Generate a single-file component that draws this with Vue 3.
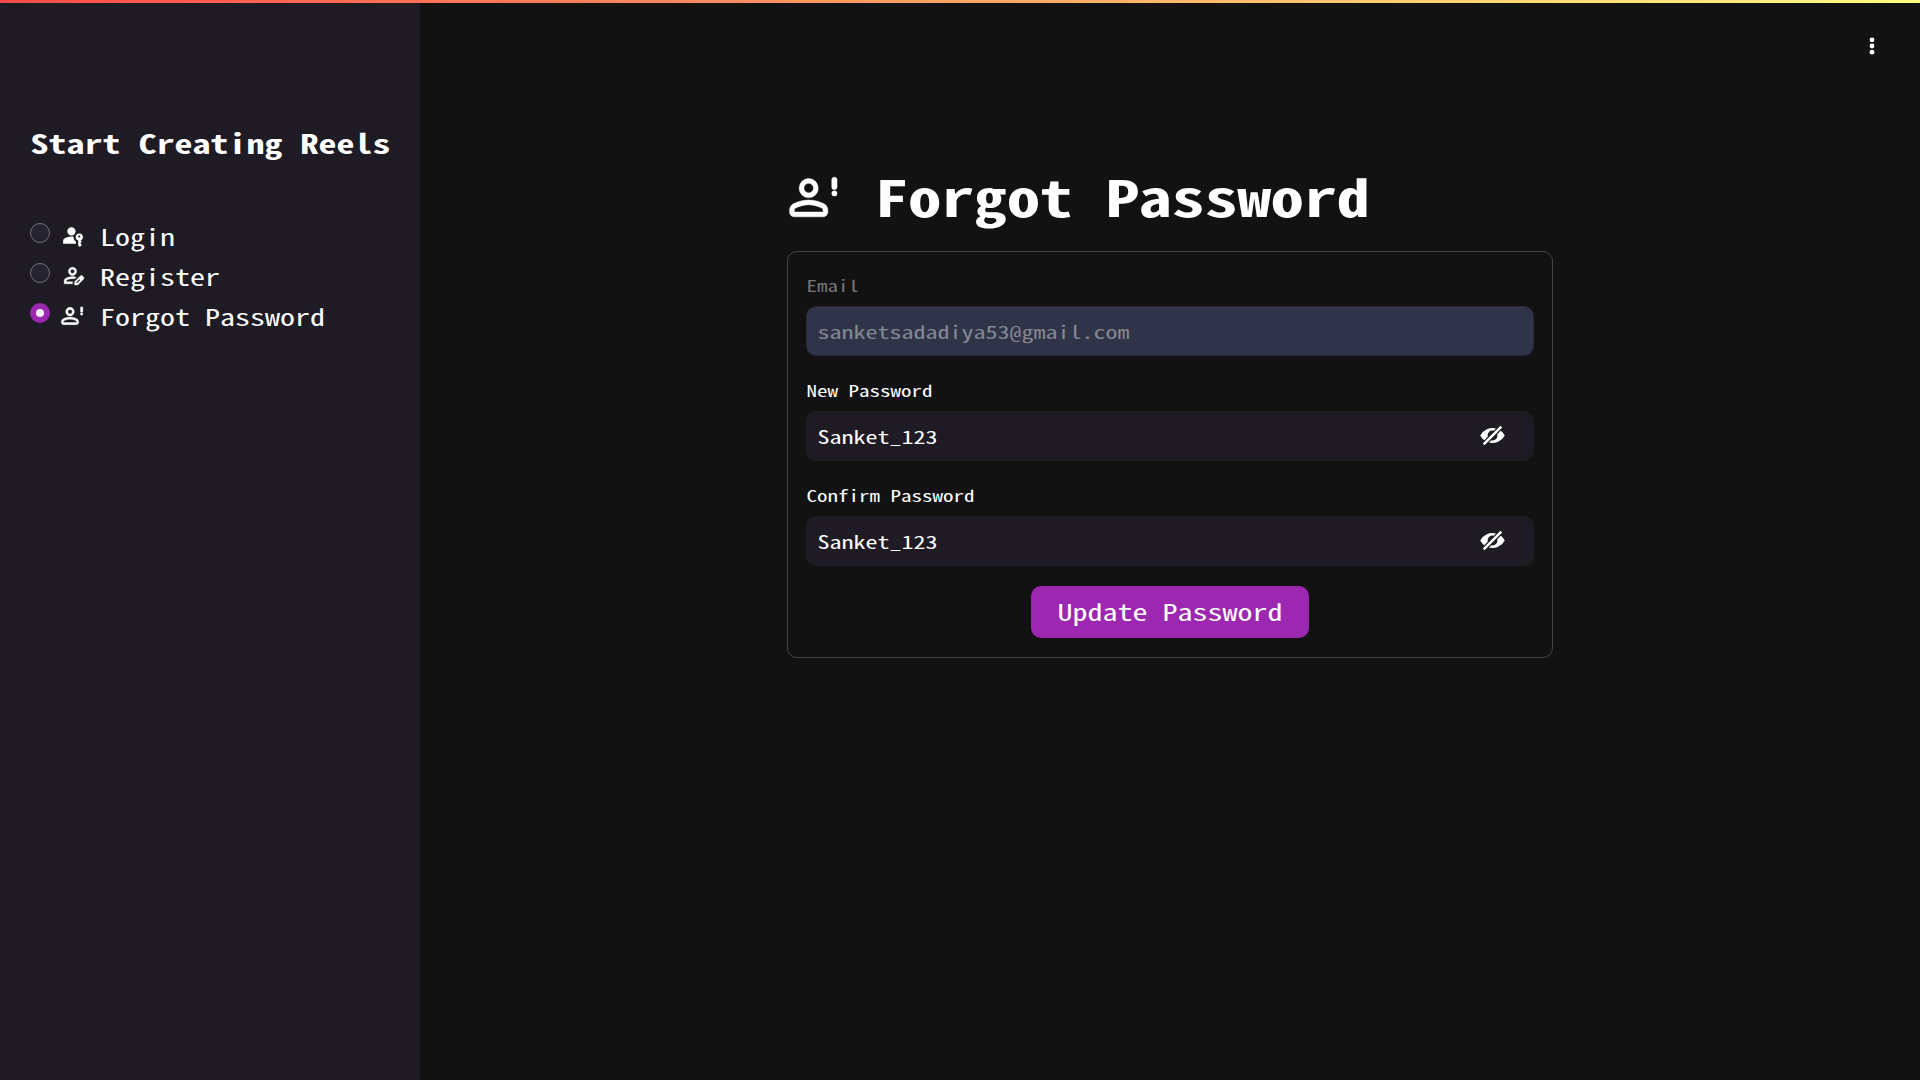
<script setup>
import { ref } from 'vue'

const icons = {
  key: 'M120-160v-112q0-34 17.5-62.5T184-378q62-31 126-46.5T440-440q20 0 40 1.5t40 4.5q-4 58 21 109.5t73 84.5v80H120ZM760-40l-60-60v-186q-44-13-72-49.5T600-420q0-58 41-99t99-41q58 0 99 41t41 99q0 45-25.5 80T790-290l50 50-60 60 60 60-80 80ZM440-480q-66 0-113-47t-47-113q0-66 47-113t113-47q66 0 113 47t47 113q0 66-47 113t-113 47Zm300 80q17 0 28.5-11.5T780-440q0-17-11.5-28.5T740-480q-17 0-28.5 11.5T700-440q0 17 11.5 28.5T740-400Z',
  edit: 'M160-160v-112q0-34 17.5-62.5T224-378q62-31 126-46.5T480-440q37 0 73 4.5t72 14.5l-67 68q-20-3-39-5t-39-2q-56 0-111 13.5T260-306q-9 5-14.5 14t-5.5 20v32h240v80H160Zm400 40v-123l221-220q9-9 20-13t22-4q12 0 23 4.5t20 13.5l37 37q8 9 12.5 20t4.5 22q0 11-4 22.5T903-340L683-120H560Zm60-60h38l121-122-18-19-19-18-122 121v38ZM480-480q-66 0-113-47t-47-113q0-66 47-113t113-47q66 0 113 47t47 113q0 66-47 113t-113 47Zm0-80q33 0 56.5-23.5T560-640q0-33-23.5-56.5T480-720q-33 0-56.5 23.5T400-640q0 33 23.5 56.5T480-560Z',
  alert: 'M12 12q-1.65 0-2.825-1.175T8 8t1.175-2.825T12 4t2.825 1.175T16 8t-1.175 2.825T12 12ZM12 10q.825 0 1.413-.587T14 8t-.587-1.413T12 6t-1.413.587T10 8t.587 1.413T12 10ZM4 18v-.8q0-.85.438-1.562T5.6 14.55q1.55-.775 3.15-1.162T12 13t3.25.388 3.15 1.162q.725.375 1.163 1.088T20 17.2v.8q0 .825-.587 1.413T18 20H6q-.825 0-1.412-.587T4 18Zm2 0h12v-.8q0-.275-.137-.5t-.363-.35q-1.35-.675-2.725-1.012T12 15t-2.775.338T6.5 16.35q-.225.125-.363.35T6 17.2ZM21.65 4.5a1.1 1.1 0 0 1 2.2 0v3a1.1 1.1 0 0 1-2.2 0ZM22.75 9.1a1.1 1.1 0 1 1 0 2.2 1.1 1.1 0 0 1 0-2.2Z',
}

const selected = ref('forgot')
const menu = [
  { id: 'login', label: 'Login', icon: icons.key, box: '0 -960 960 960' },
  { id: 'register', label: 'Register', icon: icons.edit, box: '0 -960 960 960' },
  { id: 'forgot', label: 'Forgot Password', icon: icons.alert, box: '0 0 26 24' },
]

const fields = [
  { label: 'Email', value: 'sanketsadadiya53@gmail.com', disabled: true },
  { label: 'New Password', value: 'Sanket_123' },
  { label: 'Confirm Password', value: 'Sanket_123' },
]
</script>

<template>
  <div class="app">
    <div class="decoration"></div>
    <aside class="sidebar">
      <h2 class="brand"><span class="wide">Start Creating Reels</span></h2>
      <nav class="menu">
        <div v-for="m in menu" :key="m.id" class="option" @click="selected = m.id">
          <span class="radio" :class="{ on: selected === m.id }"></span>
          <span class="glyph">
            <svg :class="m.id" :viewBox="m.box"><path fill-rule="evenodd" :d="m.icon" /></svg>
          </span>
          <span class="option-label wide">{{ m.label }}</span>
        </div>
      </nav>
    </aside>
    <main class="main">
      <header class="toolbar">
        <svg class="dots" viewBox="0 0 6 20">
          <circle cx="3" cy="3.8" r="2.4" />
          <circle cx="3" cy="10" r="2.4" />
          <circle cx="3" cy="16.2" r="2.4" />
        </svg>
      </header>
      <section class="content">
        <h1 class="title">
          <svg class="title-icon" viewBox="0 0 26 24"><path fill-rule="evenodd" :d="icons.alert" /></svg>
          <span class="title-text wide">Forgot Password</span>
        </h1>
        <form class="card" @submit.prevent>
          <div v-for="f in fields" :key="f.label" class="field" :class="{ disabled: f.disabled }">
            <label class="label"><span class="wide">{{ f.label }}</span></label>
            <div class="input">
              <span class="wide">{{ f.value }}</span>
              <svg v-if="!f.disabled" class="eye" viewBox="0 0 20 20">
                <path d="M12.81 4.36l-1.77 1.78a4 4 0 0 0-4.9 4.9l-2.76 2.75C2.06 12.79.96 11.49.2 10a11 11 0 0 1 12.6-5.64zm3.8 1.85c1.33 1 2.43 2.3 3.2 3.79a11 11 0 0 1-12.62 5.64l1.77-1.78a4 4 0 0 0 4.9-4.9l2.76-2.75zm-.25-3.99l1.42 1.42L3.64 17.78l-1.42-1.42L16.36 2.22z" />
              </svg>
            </div>
          </div>
          <button class="submit" type="submit"><span class="wide">Update Password</span></button>
        </form>
      </section>
    </main>
  </div>
</template>

<style>
body {
  margin: 0;
  background: #121212;
}
</style>

<style scoped>
.app {
  position: relative;
  display: flex;
  height: 1080px;
  overflow: hidden;
  background: #121212;
  color: #fff;
  font-family: "Noto Sans Mono CJK SC", "DejaVu Sans Mono", monospace;
  font-size: 24px;
}
/* gives the condensed half-width Latin glyphs normal proportions */
.wide {
  display: inline-block;
  vertical-align: top;
  white-space: nowrap;
  transform: scaleY(0.75);
}
svg {
  display: block;
  flex: none;
  fill: #fff;
}
.decoration {
  position: absolute;
  top: 0;
  left: 0;
  right: 0;
  height: 3px;
  background: linear-gradient(90deg, #ff4b4b, #fffd80);
}
.sidebar {
  box-sizing: border-box;
  flex: none;
  width: 420px;
  padding: 118px 0 0 30px;
  background: #1f1b24;
}
.brand {
  margin: 0;
  height: 48px;
  padding-left: 0.4px;
  font-size: 36px;
  font-weight: 700;
  line-height: 48px;
}
.menu {
  margin-top: 52px;
}
.option {
  display: flex;
  height: 40px;
}
.radio {
  box-sizing: border-box;
  flex: none;
  width: 20px;
  height: 20px;
  margin-top: 5px;
  border: 1px solid #75737a;
  border-radius: 50%;
  background: #26222f;
}
.radio.on {
  border: 6px solid #9c27b0;
  background: #f0f0f5;
}
.glyph {
  width: 50px;
  padding: 5px 0 0 10px;
  box-sizing: border-box;
}
.glyph svg {
  width: 25px;
  height: 25px;
}
.glyph svg.register {
  stroke: #fff;
  stroke-width: 14;
}
.glyph svg.forgot {
  width: 28.2px;
  height: 26px;
  margin-left: -3.5px;
  stroke: #fff;
  stroke-width: 0.3;
}
.option-label {
  height: 37px;
  font-size: 30px;
  line-height: 37px;
}
.main {
  flex: 1;
}
.toolbar {
  display: flex;
  justify-content: flex-end;
  height: 75px;
  padding: 35.6px 44.6px 0 0;
  box-sizing: border-box;
}
.dots {
  width: 6px;
  height: 20px;
}
.content {
  width: 766px;
  margin: 83px auto 0;
}
.title {
  display: flex;
  margin: 0;
  height: 93px;
  font-size: 66px;
  line-height: 74px;
}
.title-text {
  height: 74px;
  letter-spacing: -0.04px;
}
.title-icon {
  width: 62.2px;
  height: 57.4px;
  margin: 10.7px 33.4px 0 -7.4px;
  stroke: #fff;
  stroke-width: 0.2;
}
.card {
  display: flex;
  flex-direction: column;
  box-sizing: border-box;
  height: 407px;
  padding: 18px;
  border: 1px solid #454545;
  border-radius: 10px;
}
.field {
  height: 105px;
}
.label {
  display: block;
  height: 36px;
  padding-left: 0.5px;
  font-size: 21px;
  line-height: 31px;
}
.input {
  display: flex;
  align-items: center;
  justify-content: space-between;
  box-sizing: border-box;
  height: 50px;
  padding: 0 28px 1px 10.5px;
  border: 1px solid #1f1b24;
  border-radius: 10px;
  background: #1f1b24;
  line-height: 30px;
}
.disabled .label {
  color: #757575;
}
.disabled .input {
  background: #2f3448;
  border-color: #29273a;
  color: #868894;
}
.eye {
  width: 25px;
  height: 25px;
}
.submit {
  align-self: center;
  flex: none;
  width: 278px;
  height: 52px;
  margin-top: 1px;
  padding: 0 0 2px;
  border: 0;
  border-radius: 10px;
  background: #9c27b0;
  color: #fff;
  font: inherit;
  font-size: 30px;
  line-height: 50px;
}
</style>
